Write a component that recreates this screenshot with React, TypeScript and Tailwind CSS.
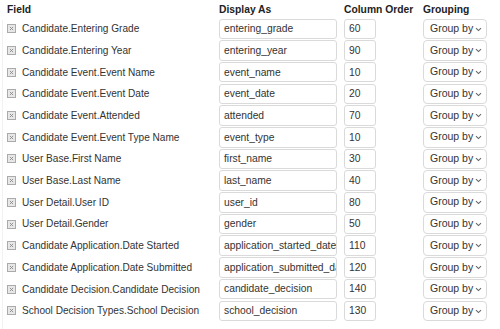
import React from "react";

const rows: [string, string, string][] = [
  ["Candidate.Entering Grade", "entering_grade", "60"],
  ["Candidate.Entering Year", "entering_year", "90"],
  ["Candidate Event.Event Name", "event_name", "10"],
  ["Candidate Event.Event Date", "event_date", "20"],
  ["Candidate Event.Attended", "attended", "70"],
  ["Candidate Event.Event Type Name", "event_type", "10"],
  ["User Base.First Name", "first_name", "30"],
  ["User Base.Last Name", "last_name", "40"],
  ["User Detail.User ID", "user_id", "80"],
  ["User Detail.Gender", "gender", "50"],
  ["Candidate Application.Date Started", "application_started_date", "110"],
  ["Candidate Application.Date Submitted", "application_submitted_date", "120"],
  ["Candidate Decision.Candidate Decision", "candidate_decision", "140"],
  ["School Decision Types.School Decision", "school_decision", "130"],
];

function XBox() {
  return (
    <svg width="9" height="9" viewBox="0 0 9 9" className="shrink-0">
      <rect x="0.5" y="0.5" width="8" height="8" fill="#e8e8e8" stroke="#aaaaaa" />
      <path d="M2.9 2.9 L6.1 6.1 M6.1 2.9 L2.9 6.1" stroke="#8a8a8a" strokeWidth="0.9" />
    </svg>
  );
}

function Chevron() {
  return (
    <svg width="7" height="5" viewBox="0 0 7 5" className="shrink-0">
      <path d="M1 1.2 L3.5 3.6 L6 1.2" fill="none" stroke="#666" strokeWidth="1.1" />
    </svg>
  );
}

export default function App() {
  return (
    <div
      className="w-[500px] h-[329px] bg-white overflow-hidden text-[#222] relative"
      style={{ fontFamily: '"Liberation Sans", Arial, sans-serif' }}
    >
      <div className="absolute left-[2px] top-[20px] bottom-0 w-px bg-[#f2f2f2]" />
      <div className="flex h-[18px] items-center pt-[2px] text-[10.3px] font-bold text-[#222] whitespace-nowrap">
        <div className="pl-[7px] w-[219px] shrink-0">Field</div>
        <div className="w-[125px] shrink-0">Display As</div>
        <div className="w-[79px] shrink-0">Column Order</div>
        <div className="shrink-0">Grouping</div>
      </div>
      {rows.map(([field, disp, order]) => (
        <div key={field} className="flex w-[500px] h-[21.7px] items-center">
          <div className="flex items-center w-[219px] shrink-0 pl-[7px]">
            <XBox />
            <span className="ml-[6px] text-[#333] whitespace-nowrap text-[10.1px]">{field}</span>
          </div>
          <div className="w-[125px] shrink-0 h-full flex items-center">
            <div className="w-[118px] h-[20.5px] border border-[#dadada] rounded-[3px] flex items-center pl-[4px] overflow-hidden whitespace-nowrap text-[#333] text-[10.3px]">
              {disp}
            </div>
          </div>
          <div className="w-[79px] shrink-0 h-full flex items-center">
            <div className="w-[32px] h-[20.5px] border border-[#dadada] rounded-[3px] flex items-center pl-[4px] text-[#333] text-[10.3px]">
              {order}
            </div>
          </div>
          <div className="w-[64px] shrink-0 h-full flex items-center">
            <div className="relative w-[64px] h-[20.5px] border border-[#dadada] rounded-[4px] bg-white flex items-center pl-[6px] text-[#333] text-[10.5px] whitespace-nowrap">
              <span>Group by</span>
              <span className="absolute right-[4px] top-[7px] flex">
                <Chevron />
              </span>
            </div>
          </div>
        </div>
      ))}
    </div>
  );
}
